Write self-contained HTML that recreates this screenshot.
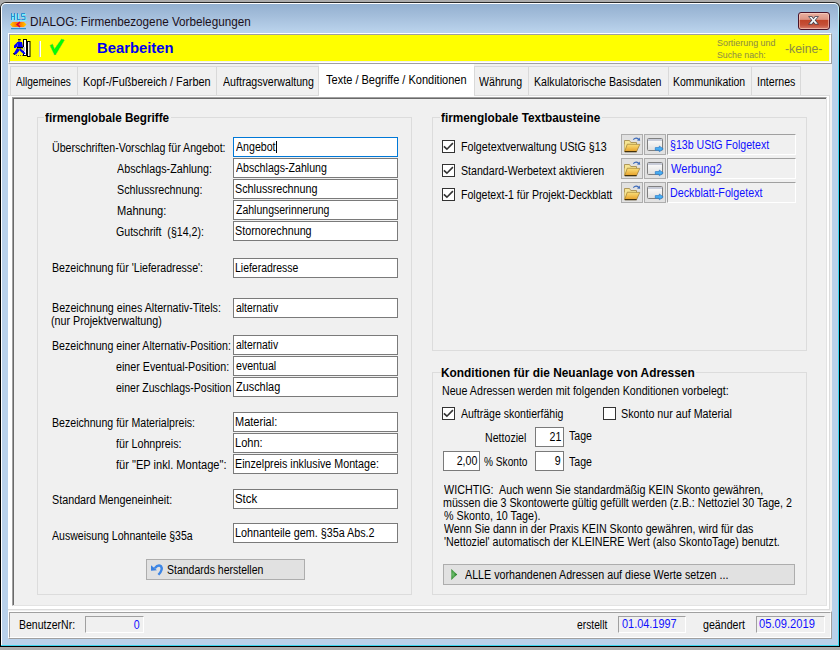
<!DOCTYPE html>
<html><head><meta charset="utf-8">
<style>
*{box-sizing:border-box;margin:0;padding:0}
html,body{width:840px;height:650px;overflow:hidden;background:#acacac;font-family:"Liberation Sans",sans-serif;font-size:12px;color:#000}
.a{position:absolute}
.t{position:absolute;white-space:pre;line-height:13px;transform-origin:0 0}
svg{position:absolute;overflow:visible}
</style></head><body>
<div class="a" style="left:0px;top:2px;width:840px;height:645px;background:linear-gradient(#2a2a2a,#000 30px);border-radius:6px 6px 0 0"></div>
<div class="a" style="left:1px;top:3px;width:838px;height:643px;background:linear-gradient(#d8f8ff,#a8ecfa 20px,#60dcf4 60px,#3cd6f0 120px);border-radius:5px 5px 0 0"></div>
<div class="a" style="left:1px;top:3px;width:837px;height:642px;background:#fff;border-radius:5px 5px 0 0"></div>
<div class="a" style="left:2px;top:4px;width:836px;height:641px;background:linear-gradient(#93b0d0 0px,#a4bedb 12px,#bad3ec 28px,#b9d1ea 40px);border-radius:4px 4px 0 0"></div>
<div class="a" style="left:1px;top:645px;width:838px;height:1px;background:#3cd6f0"></div>
<div class="a" style="left:8px;top:33px;width:824px;height:606px;background:#f0f0f0"></div>
<svg style="left:10px;top:12px" width="17" height="18" viewBox="0 0 17 18">
<g stroke="#70f4ff" stroke-width="1" fill="none" transform="translate(1,1)">
<path d="M1.5 1v7M4.5 1v7M1.5 4.5h3M7.5 1v7M7.5 7.5h3M15 1.5h-3.5v3h3.5v3h-3.5"/></g>
<g stroke="#2c8ed0" stroke-width="1" fill="none">
<path d="M1.5 1v7M4.5 1v7M1.5 4.5h3M7.5 1v7M7.5 7.5h3M15 1.5h-3.5v3h3.5v3h-3.5"/></g>
<defs><linearGradient id="hg" x1="0" x2="1"><stop offset="0" stop-color="#ffd400"/><stop offset=".35" stop-color="#ff8000"/><stop offset=".65" stop-color="#ff8000"/><stop offset="1" stop-color="#ffd400"/></linearGradient></defs>
<path d="M0 12.5 L2.5 10 L14 10 L16.5 12.5 L14 15 L2.5 15 Z" fill="url(#hg)"/>
<path d="M10 10.2 L7.2 12.5 L10 14.8" stroke="#d8003a" stroke-width="1.6" fill="none"/>
<rect x="1" y="16" width="15" height="1.2" fill="#2c90d0"/>
</svg>
<div class="t" id="tf653ffcc" style="left:29.89px;top:16px;color:#1a0f1a;transform:scaleX(0.9760);">DIALOG: Firmenbezogene Vorbelegungen</div>
<div class="a" style="left:798px;top:12px;width:32px;height:18px;border:1px solid #4a1428;border-radius:3px;background:linear-gradient(#eab0a0 0,#dd9585 40%,#c04428 45%,#c55038 75%,#d88070 100%);box-shadow:inset 0 0 0 1px rgba(255,220,210,.55)"></div>
<svg style="left:808px;top:16px" width="11" height="9" viewBox="0 0 11 9"><path d="M0 0.2 H4.2 L5.5 1.9 L6.8 0.2 H11 L7.7 4.35 L11 8.5 H6.8 L5.5 6.8 L4.2 8.5 H0 L3.3 4.35 Z" fill="#3a4252"/><path d="M1.3 1 H3.8 L5.5 3.2 L7.2 1 H9.7 L6.7 4.35 L9.7 7.7 H7.2 L5.5 5.5 L3.8 7.7 H1.3 L4.3 4.35 Z" fill="#f8f8f8"/></svg>
<div class="a" style="left:8px;top:33px;width:824px;height:31px;border-top:1px solid #fff;border-left:1px solid #fff;border-right:1px solid #a0a0a0;border-bottom:1px solid #a0a0a0"></div>
<div class="a" style="left:9px;top:34px;width:822px;height:29px;border-top:1px solid #a0a0a0;border-left:1px solid #a0a0a0;border-right:1px solid #fff;border-bottom:1px solid #fff"></div>
<div class="a" style="left:10px;top:35px;width:819px;height:26px;background:#ffff00"></div>
<svg style="left:13px;top:38px" width="19" height="20" viewBox="0 0 19 20">
<rect x="14.5" y="3.5" width="2.5" height="15" fill="#ffffe0" stroke="#000"/>
<rect x="10.5" y="1.5" width="3" height="16" fill="#fff" stroke="#000"/>
<rect x="10" y="9" width="2" height="4" fill="#c0c0c0"/>
<rect x="5" y="1" width="2.7" height="1.2" fill="#202010"/>
<rect x="5" y="2.2" width="2.5" height="1.8" fill="#8a8a30"/>
<path d="M4 4 L9 4 L10 9 L4 9 Z M4 4.5 L1 7.5 L1 10 L2.5 10 L4.5 8 Z M4 10 L1 15 L1 16.5 L3 16.5 L7 12 Z M7 10 L11.5 14 L12.5 16 L10.5 16 L6 12 Z" fill="#0000ff"/>
<rect x="4" y="9" width="6" height="1.3" fill="#000"/>
<path d="M0.5 15 L1.5 17" stroke="#000" stroke-width="1"/>
<path d="M3 17.5h1M5 17.5h1M7 17.5h1M9 17.5h1" stroke="#606060"/>
</svg>
<div class="a" style="left:39px;top:41px;width:1px;height:16px;background:#c8c8c8"></div>
<div class="a" style="left:40px;top:41px;width:1px;height:16px;background:#fff"></div>
<svg style="left:49px;top:38px" width="16" height="18" viewBox="0 0 16 18">
<path d="M1 7.5 L3.5 6 L5.5 11 L12.5 1 L15.5 2 L6.5 17 L5.5 17 Z" fill="#00ff00" stroke="#6a9a6a" stroke-width="0.6" stroke-dasharray="1 1"/>
</svg>
<div class="t" id="t1a251dd2" style="left:96.97px;top:40px;color:#0000f0;font-weight:bold;font-size:14px;transform:scaleX(1.0582);line-height:16px;">Bearbeiten</div>
<div class="t" id="t744ec460" style="left:717.00px;top:37px;color:#8a8a48;font-size:9px;transform:scaleX(0.9900);">Sortierung und</div>
<div class="t" id="t36c6a57a" style="left:717.00px;top:49px;color:#8a8a48;font-size:9px;transform:scaleX(0.9750);">Suche nach:</div>
<div class="t" id="t418cdbd4" style="left:785.20px;top:43px;color:#8a8a48;transform:scaleX(1.0200);">-keine-</div>
<div class="a" style="left:8px;top:95px;width:822px;height:515px;background:#fff;border-right:1px solid #dcdcdc;border-bottom:1px solid #dcdcdc"></div>
<div class="a" style="left:12px;top:97px;width:815px;height:509px;background:#f0f0f0;border-top:1px solid #a0a0a0;border-left:1px solid #a0a0a0;border-right:1px solid #e3e3e3;border-bottom:1px solid #e3e3e3"></div>
<div class="a" style="left:13px;top:98px;width:813px;height:507px;border-top:1px solid #696969;border-left:1px solid #696969"></div>
<div class="a" style="left:10px;top:66px;width:68px;height:30px;background:#f0f0f0;border:1px solid #d9d9d9;border-bottom:none"></div>
<div class="a" style="left:77px;top:66px;width:140px;height:30px;background:#f0f0f0;border:1px solid #d9d9d9;border-bottom:none"></div>
<div class="a" style="left:216px;top:66px;width:103px;height:30px;background:#f0f0f0;border:1px solid #d9d9d9;border-bottom:none"></div>
<div class="a" style="left:474px;top:66px;width:55px;height:30px;background:#f0f0f0;border:1px solid #d9d9d9;border-bottom:none"></div>
<div class="a" style="left:528px;top:66px;width:141px;height:30px;background:#f0f0f0;border:1px solid #d9d9d9;border-bottom:none"></div>
<div class="a" style="left:668px;top:66px;width:84px;height:30px;background:#f0f0f0;border:1px solid #d9d9d9;border-bottom:none"></div>
<div class="a" style="left:751px;top:66px;width:50px;height:30px;background:#f0f0f0;border:1px solid #d9d9d9;border-bottom:none"></div>
<div class="t" id="t31b5f021" style="left:16.00px;top:76px;transform:scaleX(0.8392);">Allgemeines</div>
<div class="t" id="t97415694" style="left:82.98px;top:76px;transform:scaleX(0.9066);">Kopf-/Fußbereich / Farben</div>
<div class="t" id="t28cfa83f" style="left:223.00px;top:76px;transform:scaleX(0.8850);">Auftragsverwaltung</div>
<div class="t" id="tc9f75320" style="left:479.00px;top:76px;transform:scaleX(0.8850);">Währung</div>
<div class="t" id="tb0d42b78" style="left:534.00px;top:76px;transform:scaleX(0.8850);">Kalkulatorische Basisdaten</div>
<div class="t" id="t920b891c" style="left:673.01px;top:76px;transform:scaleX(0.8727);">Kommunikation</div>
<div class="t" id="t181ad8ff" style="left:757.00px;top:76px;transform:scaleX(0.8850);">Internes</div>
<div class="a" style="left:8px;top:95px;width:822px;height:1px;background:#dcdcdc"></div>
<div class="a" style="left:319px;top:64px;width:155px;height:33px;background:#fff"></div>
<div class="t" id="t05f0d0bb" style="left:326.00px;top:74px;transform:scaleX(0.9178);">Texte / Begriffe / Konditionen</div>
<div class="a" style="left:37px;top:117px;width:375px;height:478px;border:1px solid #dcdcdc"></div>
<div class="a" style="left:44px;top:115px;width:126.5px;height:5px;background:#f0f0f0"></div>
<div class="t" id="t789e0bab" style="left:45.00px;top:112px;font-weight:bold;transform:scaleX(0.9743);">firmenglobale Begriffe</div>
<div class="a" style="left:432px;top:117px;width:375px;height:234px;border:1px solid #dcdcdc"></div>
<div class="a" style="left:439.5px;top:115px;width:162.5px;height:5px;background:#f0f0f0"></div>
<div class="t" id="tc63b8c30" style="left:440.50px;top:112px;font-weight:bold;transform:scaleX(0.9838);">firmenglobale Textbausteine</div>
<div class="a" style="left:432px;top:372px;width:375px;height:223px;border:1px solid #dcdcdc"></div>
<div class="a" style="left:441px;top:370px;width:255px;height:5px;background:#f0f0f0"></div>
<div class="t" id="t94e495f1" style="left:441.00px;top:367px;font-weight:bold;transform:scaleX(0.9900);">Konditionen für die Neuanlage von Adressen</div>
<div class="t" id="tc63bf3a9" style="left:51.51px;top:142px;transform:scaleX(0.8851);">Überschriften-Vorschlag für Angebot:</div>
<div class="t" id="tb74d3d86" style="left:117.00px;top:163px;transform:scaleX(0.8950);">Abschlags-Zahlung:</div>
<div class="t" id="t3cd43058" style="left:117.48px;top:184px;transform:scaleX(0.8957);">Schlussrechnung:</div>
<div class="t" id="td8394bb6" style="left:117.43px;top:205px;transform:scaleX(0.9243);">Mahnung:</div>
<div class="t" id="t60c8ad4d" style="left:116.00px;top:226px;transform:scaleX(0.8850);">Gutschrift  (§14,2):</div>
<div class="t" id="t1ad96685" style="left:52.49px;top:262px;transform:scaleX(0.8850);">Bezeichnung für 'Lieferadresse':</div>
<div class="t" id="tf8f6e792" style="left:52.49px;top:302px;transform:scaleX(0.8903);">Bezeichnung eines Alternativ-Titels:</div>
<div class="t" id="t75195ff8" style="left:51.29px;top:315px;transform:scaleX(0.8932);">(nur Projektverwaltung)</div>
<div class="t" id="t2db48f9c" style="left:51.50px;top:340px;transform:scaleX(0.8850);">Bezeichnung einer Alternativ-Position:</div>
<div class="t" id="t69299a85" style="left:116.00px;top:361px;transform:scaleX(0.8930);">einer Eventual-Position:</div>
<div class="t" id="t24875b77" style="left:116.00px;top:382px;transform:scaleX(0.8774);">einer Zuschlags-Position</div>
<div class="t" id="taeb035d1" style="left:51.53px;top:417px;transform:scaleX(0.8821);">Bezeichnung für Materialpreis:</div>
<div class="t" id="t561dbac4" style="left:116.25px;top:438px;transform:scaleX(0.8923);">für Lohnpreis:</div>
<div class="t" id="tf0691ee7" style="left:116.24px;top:459px;transform:scaleX(0.9229);">für "EP inkl. Montage":</div>
<div class="t" id="t799c117a" style="left:51.50px;top:494px;transform:scaleX(0.8964);">Standard Mengeneinheit:</div>
<div class="t" id="tb8fecac3" style="left:52.00px;top:530px;transform:scaleX(0.8788);">Ausweisung Lohnanteile §35a</div>
<div class="a" style="left:233px;top:137px;width:165px;height:20px;background:#fff;border:1px solid #0078d7"></div>
<div class="t" id="t0e98f79f" style="left:236.00px;top:141px;transform:scaleX(0.8850);">Angebot</div>
<div class="a" style="left:233px;top:158px;width:165px;height:20px;background:#fff;border:1px solid #7a7a7a"></div>
<div class="t" id="ta92d8612" style="left:236.00px;top:162px;transform:scaleX(0.8850);">Abschlags-Zahlung</div>
<div class="a" style="left:233px;top:179px;width:165px;height:20px;background:#fff;border:1px solid #7a7a7a"></div>
<div class="t" id="t8a725df8" style="left:234.99px;top:183px;transform:scaleX(0.8961);">Schlussrechnung</div>
<div class="a" style="left:233px;top:200px;width:165px;height:20px;background:#fff;border:1px solid #7a7a7a"></div>
<div class="t" id="t82963943" style="left:236.00px;top:204px;transform:scaleX(0.8756);">Zahlungserinnerung</div>
<div class="a" style="left:233px;top:221px;width:165px;height:20px;background:#fff;border:1px solid #7a7a7a"></div>
<div class="t" id="t374304bb" style="left:234.99px;top:225px;transform:scaleX(0.8970);">Stornorechnung</div>
<div class="a" style="left:233px;top:258px;width:165px;height:20px;background:#fff;border:1px solid #7a7a7a"></div>
<div class="t" id="t61f8f37f" style="left:235.02px;top:262px;transform:scaleX(0.8710);">Lieferadresse</div>
<div class="a" style="left:233px;top:298px;width:165px;height:20px;background:#fff;border:1px solid #7a7a7a"></div>
<div class="t" id="t76685867" style="left:236.00px;top:302px;transform:scaleX(0.8644);">alternativ</div>
<div class="a" style="left:233px;top:335px;width:165px;height:20px;background:#fff;border:1px solid #7a7a7a"></div>
<div class="t" id="t7d6c4c41" style="left:236.00px;top:339px;transform:scaleX(0.8644);">alternativ</div>
<div class="a" style="left:233px;top:356px;width:165px;height:20px;background:#fff;border:1px solid #7a7a7a"></div>
<div class="t" id="tb00bb1de" style="left:236.00px;top:360px;transform:scaleX(0.8850);">eventual</div>
<div class="a" style="left:233px;top:377px;width:165px;height:20px;background:#fff;border:1px solid #7a7a7a"></div>
<div class="t" id="t52062132" style="left:236.00px;top:381px;transform:scaleX(0.9076);">Zuschlag</div>
<div class="a" style="left:233px;top:412px;width:165px;height:20px;background:#fff;border:1px solid #7a7a7a"></div>
<div class="t" id="t9f8dbc02" style="left:234.98px;top:416px;transform:scaleX(0.9173);">Material:</div>
<div class="a" style="left:233px;top:433px;width:165px;height:20px;background:#fff;border:1px solid #7a7a7a"></div>
<div class="t" id="t7201ce6e" style="left:234.96px;top:437px;transform:scaleX(0.9204);">Lohn:</div>
<div class="a" style="left:233px;top:454px;width:165px;height:20px;background:#fff;border:1px solid #7a7a7a"></div>
<div class="t" id="tde9a2a52" style="left:234.99px;top:458px;transform:scaleX(0.8913);">Einzelpreis inklusive Montage:</div>
<div class="a" style="left:233px;top:489px;width:165px;height:20px;background:#fff;border:1px solid #7a7a7a"></div>
<div class="t" id="t5df53507" style="left:234.93px;top:493px;transform:scaleX(0.9513);">Stck</div>
<div class="a" style="left:233px;top:523px;width:165px;height:20px;background:#fff;border:1px solid #7a7a7a"></div>
<div class="t" id="tf5841f5b" style="left:234.99px;top:527px;transform:scaleX(0.8980);">Lohnanteile gem. §35a Abs.2</div>
<div class="a" style="left:276px;top:141px;width:1px;height:12px;background:#000"></div>
<div class="a" style="left:146px;top:559px;width:159px;height:21px;background:#e1e1e1;border:1px solid #adadad"></div>
<svg style="left:151px;top:563px" width="12" height="13" viewBox="0 0 12 13">
<path d="M3.8 5.2 Q7 1.2 10 3.2 Q12.3 6.5 7.4 11.8" stroke="#3d86e6" stroke-width="2.4" fill="none"/>
<path d="M0 2.2 L0 7.8 L6 7.3 Z" fill="#3a80e0"/>
</svg>
<div class="t" id="tc78810e5" style="left:167.28px;top:564px;transform:scaleX(0.8757);">Standards herstellen</div>
<div class="a" style="left:442px;top:140px;width:13px;height:13px;background:#fff;border:1px solid #333"></div>
<svg style="left:442px;top:140px" width="13" height="13" viewBox="0 0 13 13"><path d="M1.9 6.3 L4.9 9.2 L10.9 3.1" stroke="#333" stroke-width="1.6" fill="none"/></svg>
<div class="t" id="tfd2e564d" style="left:461.49px;top:141px;transform:scaleX(0.8912);">Folgetextverwaltung UStG §13</div>
<div class="a" style="left:621px;top:134px;width:22px;height:21px;background:#e1e1e1;border:1px solid #adadad"></div>
<svg style="left:621px;top:134px" width="22" height="21" viewBox="0 0 22 21">
<defs><linearGradient id="fg134" x1="0" y1="0" x2="0" y2="1"><stop offset="0" stop-color="#fbe07a"/><stop offset="1" stop-color="#e6a028"/></linearGradient></defs>
<path d="M3.5 17.5 V6.5 H8.5 L9.8 8.5 H15.5 V10.5" fill="#f6e594" stroke="#a89050" stroke-width="0.9"/>
<path d="M3.5 10.3 H15.5 V17.5 H3.5 Z" fill="#f6e594"/>
<path d="M6.3 10.2 L18.8 10.4 L15.6 17.6 L3.6 17.6 Z" fill="url(#fg134)" stroke="#9a7a30" stroke-width="0.7"/>
<path d="M3.8 17.7 H15.6" stroke="#302000" stroke-width="1.1"/>
<path d="M12.3 5.6 Q14.8 3 17.6 5.2" stroke="#3a68b8" stroke-width="1.2" fill="none"/>
<path d="M16 6.6 L19.2 6.8 L18.6 3.6 Z" fill="#3a68b8"/>
</svg>
<div class="a" style="left:644px;top:134px;width:22px;height:21px;background:#e1e1e1;border:1px solid #adadad"></div>
<svg style="left:644px;top:134px" width="22" height="21" viewBox="0 0 22 21">
<defs><linearGradient id="wg134" x1="0" y1="0" x2="0" y2="1"><stop offset="0" stop-color="#ffffff"/><stop offset="1" stop-color="#dedede"/></linearGradient></defs>
<rect x="3.5" y="4.5" width="15" height="12" rx="1" fill="url(#wg134)" stroke="#808080" stroke-width="1"/>
<rect x="4" y="5" width="14" height="2" fill="#c8ccd8"/>
<path d="M11.3 13.6 H15.3 V12 L19.2 14.9 L15.3 17.8 V16.2 H11.3 Z" fill="#48b0f4" stroke="#2a78c8" stroke-width="0.7"/>
</svg>
<div class="a" style="left:667px;top:134px;width:129px;height:21px;background:#f0f0f0;border-top:1px solid #a0a0a0;border-left:1px solid #a0a0a0;border-right:1px solid #fff;border-bottom:1px solid #fff"></div>
<div class="t" id="taeda6510" style="left:670.00px;top:139px;color:#1010ff;transform:scaleX(0.8850);">§13b UStG Folgetext</div>
<div class="a" style="left:442px;top:164px;width:13px;height:13px;background:#fff;border:1px solid #333"></div>
<svg style="left:442px;top:164px" width="13" height="13" viewBox="0 0 13 13"><path d="M1.9 6.3 L4.9 9.2 L10.9 3.1" stroke="#333" stroke-width="1.6" fill="none"/></svg>
<div class="t" id="tdc87afe5" style="left:460.50px;top:165px;transform:scaleX(0.8850);">Standard-Werbetext aktivieren</div>
<div class="a" style="left:621px;top:158px;width:22px;height:21px;background:#e1e1e1;border:1px solid #adadad"></div>
<svg style="left:621px;top:158px" width="22" height="21" viewBox="0 0 22 21">
<defs><linearGradient id="fg158" x1="0" y1="0" x2="0" y2="1"><stop offset="0" stop-color="#fbe07a"/><stop offset="1" stop-color="#e6a028"/></linearGradient></defs>
<path d="M3.5 17.5 V6.5 H8.5 L9.8 8.5 H15.5 V10.5" fill="#f6e594" stroke="#a89050" stroke-width="0.9"/>
<path d="M3.5 10.3 H15.5 V17.5 H3.5 Z" fill="#f6e594"/>
<path d="M6.3 10.2 L18.8 10.4 L15.6 17.6 L3.6 17.6 Z" fill="url(#fg158)" stroke="#9a7a30" stroke-width="0.7"/>
<path d="M3.8 17.7 H15.6" stroke="#302000" stroke-width="1.1"/>
<path d="M12.3 5.6 Q14.8 3 17.6 5.2" stroke="#3a68b8" stroke-width="1.2" fill="none"/>
<path d="M16 6.6 L19.2 6.8 L18.6 3.6 Z" fill="#3a68b8"/>
</svg>
<div class="a" style="left:644px;top:158px;width:22px;height:21px;background:#e1e1e1;border:1px solid #adadad"></div>
<svg style="left:644px;top:158px" width="22" height="21" viewBox="0 0 22 21">
<defs><linearGradient id="wg158" x1="0" y1="0" x2="0" y2="1"><stop offset="0" stop-color="#ffffff"/><stop offset="1" stop-color="#dedede"/></linearGradient></defs>
<rect x="3.5" y="4.5" width="15" height="12" rx="1" fill="url(#wg158)" stroke="#808080" stroke-width="1"/>
<rect x="4" y="5" width="14" height="2" fill="#c8ccd8"/>
<path d="M11.3 13.6 H15.3 V12 L19.2 14.9 L15.3 17.8 V16.2 H11.3 Z" fill="#48b0f4" stroke="#2a78c8" stroke-width="0.7"/>
</svg>
<div class="a" style="left:667px;top:158px;width:129px;height:21px;background:#f0f0f0;border-top:1px solid #a0a0a0;border-left:1px solid #a0a0a0;border-right:1px solid #fff;border-bottom:1px solid #fff"></div>
<div class="t" id="teebb00af" style="left:671.00px;top:163px;color:#1010ff;transform:scaleX(0.9219);">Werbung2</div>
<div class="a" style="left:442px;top:188px;width:13px;height:13px;background:#fff;border:1px solid #333"></div>
<svg style="left:442px;top:188px" width="13" height="13" viewBox="0 0 13 13"><path d="M1.9 6.3 L4.9 9.2 L10.9 3.1" stroke="#333" stroke-width="1.6" fill="none"/></svg>
<div class="t" id="t977f3a15" style="left:460.51px;top:189px;transform:scaleX(0.8791);">Folgetext-1 für Projekt-Deckblatt</div>
<div class="a" style="left:621px;top:182px;width:22px;height:21px;background:#e1e1e1;border:1px solid #adadad"></div>
<svg style="left:621px;top:182px" width="22" height="21" viewBox="0 0 22 21">
<defs><linearGradient id="fg182" x1="0" y1="0" x2="0" y2="1"><stop offset="0" stop-color="#fbe07a"/><stop offset="1" stop-color="#e6a028"/></linearGradient></defs>
<path d="M3.5 17.5 V6.5 H8.5 L9.8 8.5 H15.5 V10.5" fill="#f6e594" stroke="#a89050" stroke-width="0.9"/>
<path d="M3.5 10.3 H15.5 V17.5 H3.5 Z" fill="#f6e594"/>
<path d="M6.3 10.2 L18.8 10.4 L15.6 17.6 L3.6 17.6 Z" fill="url(#fg182)" stroke="#9a7a30" stroke-width="0.7"/>
<path d="M3.8 17.7 H15.6" stroke="#302000" stroke-width="1.1"/>
<path d="M12.3 5.6 Q14.8 3 17.6 5.2" stroke="#3a68b8" stroke-width="1.2" fill="none"/>
<path d="M16 6.6 L19.2 6.8 L18.6 3.6 Z" fill="#3a68b8"/>
</svg>
<div class="a" style="left:644px;top:182px;width:22px;height:21px;background:#e1e1e1;border:1px solid #adadad"></div>
<svg style="left:644px;top:182px" width="22" height="21" viewBox="0 0 22 21">
<defs><linearGradient id="wg182" x1="0" y1="0" x2="0" y2="1"><stop offset="0" stop-color="#ffffff"/><stop offset="1" stop-color="#dedede"/></linearGradient></defs>
<rect x="3.5" y="4.5" width="15" height="12" rx="1" fill="url(#wg182)" stroke="#808080" stroke-width="1"/>
<rect x="4" y="5" width="14" height="2" fill="#c8ccd8"/>
<path d="M11.3 13.6 H15.3 V12 L19.2 14.9 L15.3 17.8 V16.2 H11.3 Z" fill="#48b0f4" stroke="#2a78c8" stroke-width="0.7"/>
</svg>
<div class="a" style="left:667px;top:182px;width:129px;height:21px;background:#f0f0f0;border-top:1px solid #a0a0a0;border-left:1px solid #a0a0a0;border-right:1px solid #fff;border-bottom:1px solid #fff"></div>
<div class="t" id="tb3e7daaa" style="left:669.99px;top:187px;color:#1010ff;transform:scaleX(0.8948);">Deckblatt-Folgetext</div>
<div class="t" id="tea09ef47" style="left:442.49px;top:385px;transform:scaleX(0.8880);">Neue Adressen werden mit folgenden Konditionen vorbelegt:</div>
<div class="a" style="left:442px;top:407px;width:13px;height:13px;background:#fff;border:1px solid #333"></div>
<svg style="left:442px;top:407px" width="13" height="13" viewBox="0 0 13 13"><path d="M1.9 6.3 L4.9 9.2 L10.9 3.1" stroke="#333" stroke-width="1.6" fill="none"/></svg>
<div class="t" id="tf4d2a8f7" style="left:461.20px;top:408px;transform:scaleX(0.8766);">Aufträge skontierfähig</div>
<div class="a" style="left:603px;top:407px;width:13px;height:13px;background:#fff;border:1px solid #333"></div>
<div class="t" id="tc0fb1e27" style="left:620.99px;top:408px;transform:scaleX(0.8932);">Skonto nur auf Material</div>
<div class="t" id="t6a0480c9" style="left:484.60px;top:432px;transform:scaleX(0.8850);">Nettoziel</div>
<div class="a" style="left:535px;top:427px;width:29px;height:20px;background:#fff;border:1px solid #7a7a7a"></div>
<div class="t" style="right:279px;top:431px;transform-origin:100% 0;transform:scaleX(0.885);">21</div>
<div class="t" id="t1567f5e4" style="left:569.00px;top:430px;transform:scaleX(0.8850);">Tage</div>
<div class="a" style="left:443px;top:451px;width:37px;height:20px;background:#fff;border:1px solid #7a7a7a"></div>
<div class="t" style="right:363px;top:455px;transform-origin:100% 0;transform:scaleX(0.885);">2,00</div>
<div class="t" id="t43d46021" style="left:483.81px;top:456px;transform:scaleX(0.8459);">% Skonto</div>
<div class="a" style="left:535px;top:451px;width:29px;height:20px;background:#fff;border:1px solid #7a7a7a"></div>
<div class="t" style="right:279px;top:455px;transform-origin:100% 0;transform:scaleX(0.885);">9</div>
<div class="t" id="t13388ba0" style="left:569.00px;top:456px;transform:scaleX(0.8850);">Tage</div>
<div class="t" id="t8096ce95" style="left:444.00px;top:484px;transform:scaleX(0.8963);">WICHTIG:  Auch wenn Sie standardmäßig KEIN Skonto gewähren,</div>
<div class="t" id="tc7b9ece6" style="left:442.99px;top:497px;transform:scaleX(0.8901);">müssen die 3 Skontowerte gültig gefüllt werden (z.B.: Nettoziel 30 Tage, 2</div>
<div class="t" id="tb5f0fae2" style="left:444.00px;top:510px;transform:scaleX(0.8943);">% Skonto, 10 Tage).</div>
<div class="t" id="t273fc411" style="left:444.00px;top:523px;transform:scaleX(0.8876);">Wenn Sie dann in der Praxis KEIN Skonto gewähren, wird für das</div>
<div class="t" id="t3602d801" style="left:444.00px;top:536px;transform:scaleX(0.8903);">'Nettoziel' automatisch der KLEINERE Wert (also SkontoTage) benutzt.</div>
<div class="a" style="left:443px;top:564px;width:352px;height:21px;background:#e1e1e1;border:1px solid #adadad"></div>
<svg style="left:451px;top:569px" width="7" height="12" viewBox="0 0 7 12"><defs><radialGradient id="tg" cx=".3" cy=".5" r=".7"><stop offset="0" stop-color="#70c070"/><stop offset="1" stop-color="#107010"/></radialGradient></defs><path d="M0.3 0 L6.2 5.5 L0.3 11 Z" fill="url(#tg)"/></svg>
<div class="t" id="t696fe6a5" style="left:465.20px;top:569px;transform:scaleX(0.8918);">ALLE vorhandenen Adressen auf diese Werte setzen ...</div>
<div class="a" style="left:8px;top:611px;width:824px;height:28px;border-top:1px solid #fff;border-left:1px solid #fff;border-right:1px solid #a0a0a0;border-bottom:1px solid #a0a0a0"></div>
<div class="a" style="left:9px;top:612px;width:822px;height:26px;border-top:1px solid #a0a0a0;border-left:1px solid #a0a0a0;border-right:1px solid #fff;border-bottom:1px solid #fff"></div>
<div class="t" id="td2e6b591" style="left:19.19px;top:619px;transform:scaleX(0.8757);">BenutzerNr:</div>
<div class="a" style="left:85px;top:616px;width:59px;height:17px;border-top:1px solid #a0a0a0;border-left:1px solid #a0a0a0;border-right:1px solid #fff;border-bottom:1px solid #fff"></div>
<div class="t" style="right:700px;top:619px;transform-origin:100% 0;transform:scaleX(0.885);color:#1010ff;">0</div>
<div class="t" id="te79d2668" style="left:577.00px;top:619px;transform:scaleX(0.8565);">erstellt</div>
<div class="a" style="left:618px;top:616px;width:68px;height:17px;border-top:1px solid #a0a0a0;border-left:1px solid #a0a0a0;border-right:1px solid #fff;border-bottom:1px solid #fff"></div>
<div class="t" id="t8753b709" style="left:622.17px;top:618px;color:#1010ff;transform:scaleX(0.9090);">01.04.1997</div>
<div class="t" id="t92c95ca5" style="left:703.40px;top:619px;transform:scaleX(0.8856);">geändert</div>
<div class="a" style="left:756px;top:616px;width:69px;height:17px;border-top:1px solid #a0a0a0;border-left:1px solid #a0a0a0;border-right:1px solid #fff;border-bottom:1px solid #fff"></div>
<div class="t" id="tde237832" style="left:758.76px;top:618px;color:#1010ff;transform:scaleX(0.9296);">05.09.2019</div>
</body></html>
